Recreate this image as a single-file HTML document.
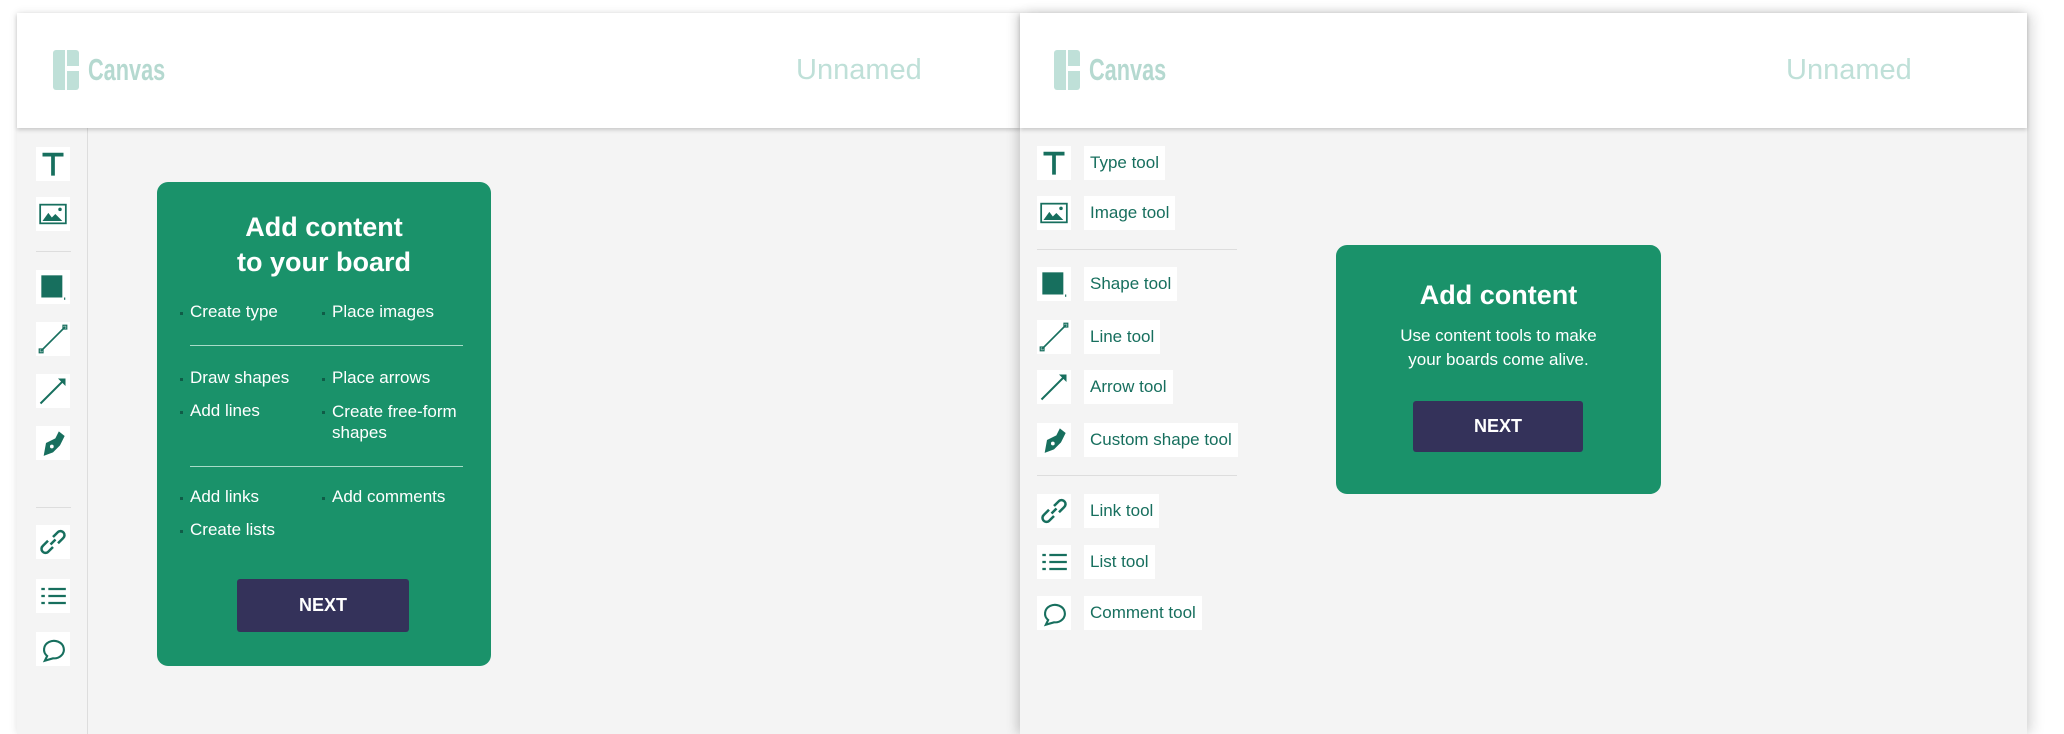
<!DOCTYPE html>
<html><head><meta charset="utf-8"><style>
*{box-sizing:border-box;margin:0;padding:0}
body{width:2064px;height:734px;background:#fff;position:relative;overflow:hidden;font-family:"Liberation Sans",sans-serif}
.panel{position:absolute;top:13px;bottom:0;background:#f4f4f4}
.hdr{position:absolute;left:0;right:0;top:0;height:115px;background:#fff;box-shadow:0 2px 4px rgba(0,0,0,.18)}
.logo{position:absolute;top:37px}
.logo .b1{position:absolute;left:0;top:0;width:12px;height:40px;background:#bfe0d8;border-radius:3px 0 0 3px}
.logo .b2{position:absolute;left:14px;top:0;width:12px;height:16px;background:#bfe0d8;border-radius:0 3px 0 0}
.logo .b3{position:absolute;left:14px;top:21px;width:12px;height:19px;background:#bfe0d8;border-radius:0 0 3px 0}
.logo span{position:absolute;left:35px;top:2px;font-size:31px;font-weight:bold;color:#b5d9d0;transform:scaleX(.7);transform-origin:left}
.un{position:absolute;top:41px;font-size:29px;color:#bfe0d8}
.card{position:absolute;background:#1a926a;border-radius:11px;color:#fff}
.btn{position:absolute;background:#34325a;border-radius:3px;color:#fff;font-size:18px;text-align:center}
.ib{position:absolute;width:34px;height:34px;background:#fff;display:flex;align-items:center;justify-content:center}
.lb{position:absolute;height:34px;background:#fff;font-size:17px;color:#176f5e;line-height:34px;padding:0 6px}
.sep{position:absolute;height:1px;background:#ddd}
.it{position:absolute;font-size:17px}
.it:before{content:"";position:absolute;left:-10px;top:10px;width:3px;height:3px;background:#0f5c47}
.dv{position:absolute;height:1px;background:#a8dcc8}
</style></head><body>
<div class="panel" style="left:17px;width:1003px;box-shadow:0 0 8px rgba(0,0,0,.12)">
 <div style="position:absolute;left:0;top:115px;bottom:0;width:71px;border-right:1px solid #ddd"></div>
 <div class="hdr"><div class="logo" style="left:36px"><div class="b1"></div><div class="b2"></div><div class="b3"></div><span>Canvas</span></div><div class="un" style="left:779px">Unnamed</div></div>
</div>
<div class="panel" style="left:1020px;width:1007px;box-shadow:-4px 0 10px rgba(0,0,0,.15),6px 0 12px rgba(0,0,0,.12)">
 <div class="hdr"><div class="logo" style="left:34px"><div class="b1"></div><div class="b2"></div><div class="b3"></div><span>Canvas</span></div><div class="un" style="left:766px">Unnamed</div></div>
</div>
<svg width="0" height="0" style="position:absolute"><defs>
<g id="iT"><path d="M3 4h18M12 4v18" stroke="#176f5e" stroke-width="3.2" fill="none"/></g>
<g id="iI"><rect x="1" y="4" width="22" height="16" fill="none" stroke="#176f5e" stroke-width="1.5"/><path d="M3 18l5-7 3 4 3-3 6 6z" fill="#176f5e"/><circle cx="18" cy="8" r="1.5" fill="#176f5e"/></g>
<g id="iS"><rect x="2" y="2" width="18" height="19" fill="#176f5e"/><path d="M22 21v2" stroke="#176f5e"/></g>
<g id="iL"><path d="M2 22L22 2" stroke="#176f5e" stroke-width="1.3"/><rect x="1" y="20" width="3" height="3" fill="none" stroke="#176f5e"/><rect x="20" y="1" width="3" height="3" fill="none" stroke="#176f5e"/></g>
<g id="iA"><path d="M2 22L21 3" stroke="#176f5e" stroke-width="1.6"/><path d="M16 2h6v6z" fill="#176f5e"/></g>
<g id="iP"><path d="M4 23l2-11 8-4 4 6-6 6zM14 8l3-6 5 4-4 8z" fill="#176f5e"/><circle cx="11" cy="15" r="1.6" fill="#fff"/></g>
<g id="iK"><path d="M10 14l4-4M8 11l-4 4a3 3 0 004 5l4-4M16 13l4-4a3 3 0 00-4-5l-4 4" stroke="#176f5e" stroke-width="2" fill="none"/></g>
<g id="iLi"><path d="M8 6h15M8 12h15M8 18h15" stroke="#176f5e" stroke-width="2"/><path d="M2 5h3v2H2zM2 11h3v2H2zM2 17h3v2H2z" fill="#176f5e"/></g>
<g id="iC"><path d="M5 22l2-4A8.5 7.5 0 1112 20z" fill="none" stroke="#176f5e" stroke-width="1.8"/></g>
</defs></svg>
<div class="ib" style="left:36px;top:147px"><svg width="28" height="28" viewBox="0 0 24 24"><use href="#iT"/></svg></div>
<div class="ib" style="left:36px;top:197px"><svg width="28" height="28" viewBox="0 0 24 24"><use href="#iI"/></svg></div>
<div class="sep" style="left:36px;top:251px;width:35px"></div>
<div class="ib" style="left:36px;top:270px"><svg width="28" height="28" viewBox="0 0 24 24"><use href="#iS"/></svg></div>
<div class="ib" style="left:36px;top:322px"><svg width="30" height="30" viewBox="0 0 24 24"><use href="#iL"/></svg></div>
<div class="ib" style="left:36px;top:374px"><svg width="30" height="30" viewBox="0 0 24 24"><use href="#iA"/></svg></div>
<div class="ib" style="left:36px;top:426px"><svg width="28" height="28" viewBox="0 0 24 24"><use href="#iP"/></svg></div>
<div class="sep" style="left:36px;top:507px;width:35px"></div>
<div class="ib" style="left:36px;top:525px"><svg width="30" height="30" viewBox="0 0 24 24"><use href="#iK"/></svg></div>
<div class="ib" style="left:36px;top:579px"><svg width="28" height="28" viewBox="0 0 24 24"><use href="#iLi"/></svg></div>
<div class="ib" style="left:36px;top:632px"><svg width="28" height="28" viewBox="0 0 24 24"><use href="#iC"/></svg></div>
<div class="card" style="left:157px;top:182px;width:334px;height:484px">
 <div style="position:absolute;left:0;right:0;top:28px;text-align:center;font-size:27px;line-height:35px;font-weight:bold">Add content<br>to your board</div>
 <div class="it" style="left:33px;top:120px">Create type</div><div class="it" style="left:175px;top:120px">Place images</div>
 <div class="dv" style="left:33px;top:163px;width:273px"></div>
 <div class="it" style="left:33px;top:186px">Draw shapes</div><div class="it" style="left:175px;top:186px">Place arrows</div>
 <div class="it" style="left:33px;top:219px">Add lines</div><div class="it" style="left:175px;top:219px;line-height:21px">Create free-form<br>shapes</div>
 <div class="dv" style="left:33px;top:284px;width:273px"></div>
 <div class="it" style="left:33px;top:305px">Add links</div><div class="it" style="left:175px;top:305px">Add comments</div>
 <div class="it" style="left:33px;top:338px">Create lists</div>
 <div class="btn" style="left:80px;top:397px;width:172px;height:53px;line-height:53px;font-weight:bold">NEXT</div>
</div>
<div class="ib" style="left:1037px;top:146px"><svg width="28" height="28" viewBox="0 0 24 24"><use href="#iT"/></svg></div><div class="lb" style="left:1084px;top:146px">Type tool</div>
<div class="ib" style="left:1037px;top:196px"><svg width="28" height="28" viewBox="0 0 24 24"><use href="#iI"/></svg></div><div class="lb" style="left:1084px;top:196px">Image tool</div>
<div class="sep" style="left:1037px;top:249px;width:200px"></div>
<div class="ib" style="left:1037px;top:267px"><svg width="28" height="28" viewBox="0 0 24 24"><use href="#iS"/></svg></div><div class="lb" style="left:1084px;top:267px">Shape tool</div>
<div class="ib" style="left:1037px;top:320px"><svg width="30" height="30" viewBox="0 0 24 24"><use href="#iL"/></svg></div><div class="lb" style="left:1084px;top:320px">Line tool</div>
<div class="ib" style="left:1037px;top:370px"><svg width="30" height="30" viewBox="0 0 24 24"><use href="#iA"/></svg></div><div class="lb" style="left:1084px;top:370px">Arrow tool</div>
<div class="ib" style="left:1037px;top:423px"><svg width="28" height="28" viewBox="0 0 24 24"><use href="#iP"/></svg></div><div class="lb" style="left:1084px;top:423px">Custom shape tool</div>
<div class="sep" style="left:1037px;top:475px;width:200px"></div>
<div class="ib" style="left:1037px;top:494px"><svg width="30" height="30" viewBox="0 0 24 24"><use href="#iK"/></svg></div><div class="lb" style="left:1084px;top:494px">Link tool</div>
<div class="ib" style="left:1037px;top:545px"><svg width="28" height="28" viewBox="0 0 24 24"><use href="#iLi"/></svg></div><div class="lb" style="left:1084px;top:545px">List tool</div>
<div class="ib" style="left:1037px;top:596px"><svg width="28" height="28" viewBox="0 0 24 24"><use href="#iC"/></svg></div><div class="lb" style="left:1084px;top:596px">Comment tool</div>
<div class="card" style="left:1336px;top:245px;width:325px;height:249px">
 <div style="position:absolute;left:0;right:0;top:35px;text-align:center;font-size:27px;font-weight:bold">Add content</div>
 <div style="position:absolute;left:0;right:0;top:79px;text-align:center;font-size:17px;line-height:24px">Use content tools to make<br>your boards come alive.</div>
 <div class="btn" style="left:77px;top:156px;width:170px;height:51px;line-height:51px;font-weight:bold">NEXT</div>
</div>
</body></html>
